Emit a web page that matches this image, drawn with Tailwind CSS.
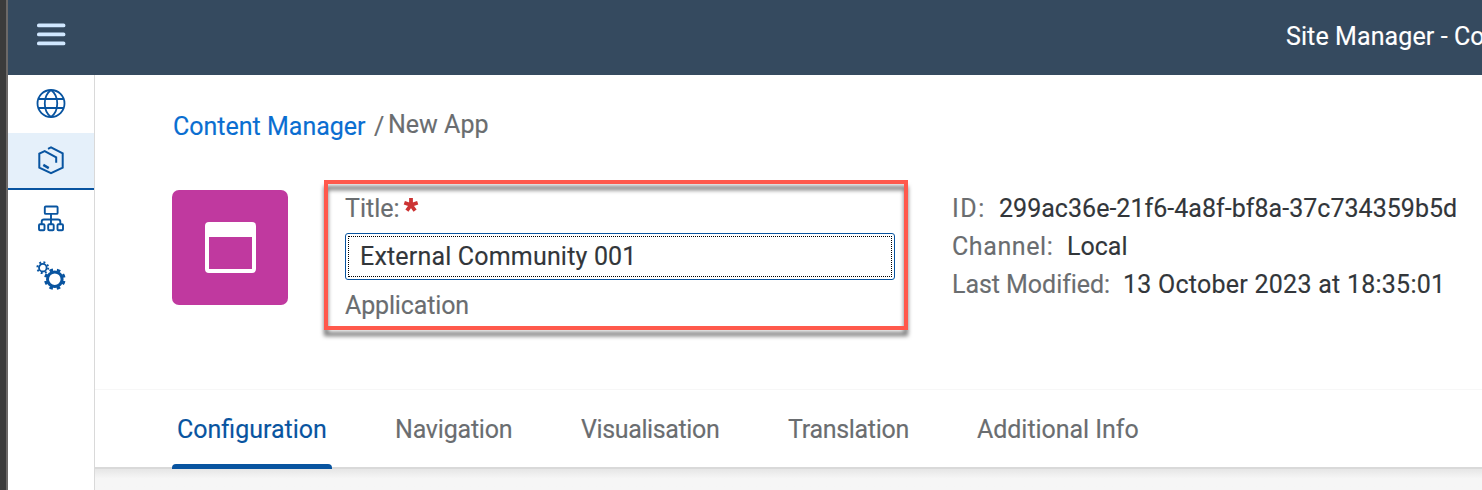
<!DOCTYPE html>
<html lang="en">
<head>
<meta charset="utf-8">
<title>Site Manager</title>
<script src="https://cdn.jsdelivr.net/npm/@tailwindcss/browser@4"></script>
</head>
<body class="flex h-[490px] w-[1482px] overflow-hidden bg-white font-['Roboto',sans-serif] text-[25px]/[28px] text-[#6a6d70] [-webkit-text-stroke:0.15px]">
  <div class="w-2 shrink-0 border-r-2 border-[#6c6968] bg-[#3b3b3b]"></div>
  <div class="flex min-w-0 flex-1 flex-col">
    <header class="flex h-[75px] shrink-0 overflow-hidden bg-[#354a5f] pt-[22px] text-white">
      <svg class="ml-[28px] h-6 w-[30px] shrink-0" viewBox="0 0 30 24" fill="none" stroke="#d1e8ff" stroke-width="3.7" stroke-linecap="round"><path d="M2.800 3.400h24.800M2.800 12.400h24.800M2.800 21.400h24.800"/></svg>
      <h1 class="mt-px ml-[1220px] whitespace-nowrap tracking-[0.1px]">Site Manager - Co</h1>
    </header>
    <div class="flex min-h-0 flex-1">
      <nav class="flex w-[87px] shrink-0 flex-col border-r border-[#d9d9d9] text-[#0854a0]">
        <a class="flex h-[58px] items-center justify-center">
          <svg class="h-[30px] w-[30px]" viewBox="0 0 30 30" fill="none" stroke="currentColor" stroke-width="1.8"><circle cx="15" cy="14.5" r="13.5"/><path d="M2.3 10h25.4M2.3 19h25.4M15 1C6.700 7 6.700 22 15 28M15 1c8.300 6 8.300 21 0 27"/></svg>
        </a>
        <a class="flex h-[57px] items-center justify-center border-b-2 border-[#0854a0] bg-[#e5f0fa]">
          <svg class="h-[30px] w-[30px]" viewBox="0 0 30 30" fill="none" stroke="currentColor" stroke-width="2"><path d="M12 2.800 15 1.400l11.700 6v14.200L15 27.200 3.300 21.600V7.700l5.400-2.600L20.200 11.300v5.500"/><path d="m7.300 18.900 5.500 3.200" stroke-width="2.400"/></svg>
        </a>
        <a class="flex h-[57px] items-center justify-center">
          <svg class="h-[30px] w-[30px]" viewBox="0 0 30 30" fill="none" stroke="currentColor" stroke-width="1.900"><rect x="8.800" y="2.500" width="12.800" height="7.400" rx="1"/><path d="M15 9.900V20M5.700 20v-2.200q0-2.300 2.300-2.300h14q2.300 0 2.300 2.300V20"/><rect x="3" y="20.200" width="5.500" height="6" rx="1"/><rect x="12.200" y="20.200" width="5.500" height="6" rx="1"/><rect x="21.500" y="20.200" width="5.500" height="6" rx="1"/></svg>
        </a>
        <a class="flex h-[58px] items-center justify-center">
          <svg class="h-[30px] w-[30px]" viewBox="0 0 30 30" fill="none" stroke="currentColor"><circle cx="6.800" cy="6.700" r="3.800" stroke-width="1.800"/><circle cx="6.800" cy="6.700" r="5.400" stroke-width="2" stroke-dasharray="1.900 2.341"/><circle cx="18.800" cy="18.200" r="7.300" stroke-width="3"/><circle cx="18.800" cy="18.200" r="9.500" stroke-width="2.600" stroke-dasharray="3.600 3.861" transform="rotate(11 18.800 18.200)"/></svg>
        </a>
      </nav>
      <main class="flex min-w-0 flex-1 flex-col">
        <section class="flex h-[314px] shrink-0 flex-col pl-[77px]">
          <div class="flex h-[105px] pt-[36px] pl-px whitespace-nowrap">
            <a class="mt-0.5 w-[201px] text-[#0a6ed1]">Content Manager</a>
            <span class="mt-0.5 w-[14px]">/</span>
            <span>New App</span>
          </div>
          <div class="flex">
            <div class="mt-[10px] flex h-[115px] w-[116px] items-center justify-center rounded-[7px] bg-[#c0399f]">
              <div class="h-[51px] w-[51px] rounded-[4px] border-4 border-t-[15px] border-white"></div>
            </div>
            <div class="relative ml-9 h-[150px] w-[584px] pt-[15px] pl-[21px]">
              <div class="pointer-events-none absolute inset-0 border-4 border-[#ff594c] drop-shadow-[0_6px_2px_rgba(0,0,0,0.55)]"></div>
              <label class="flex h-[38px]">Title:<svg class="mt-[2px] ml-[3px] h-[16px] w-[16px]" viewBox="0 0 16 16" stroke="#cc3333" stroke-width="3.800"><path d="M8 8V1M8 8 1.300 5.800M8 8l6.700-2.200M8 8l-4.100 5.700M8 8l4.100 5.700"/></svg></label>
              <div class="h-[47px] w-[550px] rounded-[3px] border border-[#0854a0] p-[2px]">
                <div class="h-full border border-dotted border-black pt-[6px] pl-[11px] tracking-[0.180px] text-[#32363a]">External Community 001</div>
              </div>
              <p class="mt-3 tracking-[-0.150px]">Application</p>
            </div>
            <dl class="ml-[44px] flex flex-col gap-[10px] pt-[15px] whitespace-nowrap">
              <div class="flex"><dt class="w-[47px] tracking-[1.500px]">ID:</dt><dd class="tracking-[0.030px] text-[#32363a]">299ac36e-21f6-4a8f-bf8a-37c734359b5d</dd></div>
              <div class="flex"><dt class="w-[115px] tracking-[0.600px]">Channel:</dt><dd class="text-[#32363a]">Local</dd></div>
              <div class="flex"><dt class="w-[171px] tracking-[-0.050px]">Last Modified:</dt><dd class="tracking-[0.250px] text-[#32363a]">13 October 2023 at 18:35:01</dd></div>
            </dl>
          </div>
        </section>
        <section class="flex h-[80px] shrink-0 border-t border-b-2 border-t-[#f7f7f7] border-b-[#d9d9d9] pl-[77px] whitespace-nowrap">
          <div class="relative w-[223px] pt-[26px] pl-[5px] text-[#0854a0]">Configuration<div class="absolute -bottom-[2px] left-0 h-[5px] w-[160px] rounded-t-[4px] bg-[#0854a0]"></div></div>
          <div class="w-[186px] pt-[26px] tracking-[-0.200px]">Navigation</div>
          <div class="w-[207px] pt-[26px] tracking-[-0.380px]">Visualisation</div>
          <div class="w-[189px] pt-[26px] tracking-[-0.300px]">Translation</div>
          <div class="pt-[26px] tracking-[-0.050px]">Additional Info</div>
        </section>
        <div class="flex-1 bg-linear-to-b from-[#e6e6e6] to-[#f6f6f6] to-45%"></div>
      </main>
    </div>
  </div>
</body>
</html>
